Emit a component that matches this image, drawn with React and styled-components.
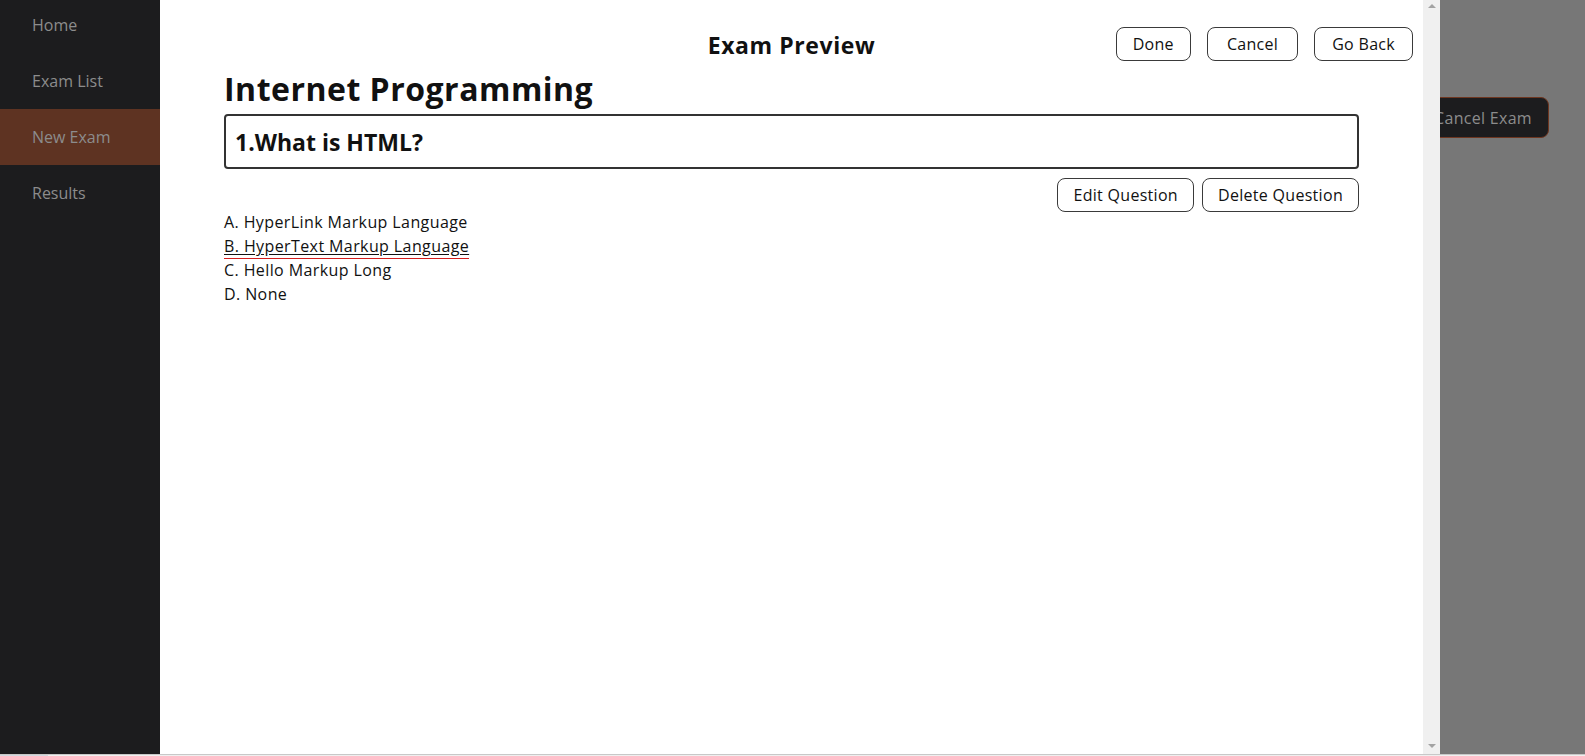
import React from "react";
import styled, { createGlobalStyle } from "styled-components";

const GlobalStyle = createGlobalStyle`
  html, body {
    margin: 0;
    padding: 0;
    height: 100%;
    overflow: hidden;
  }
  body {
    font-family: "Open Sans", "Liberation Sans", sans-serif;
    color: #111;
  }
  #root {
    height: 100%;
  }
  * {
    box-sizing: border-box;
  }
`;

const Page = styled.div`
  display: flex;
  flex-direction: column;
  height: 100vh;
`;

const Layout = styled.div`
  position: relative;
  display: flex;
  flex: 1;
  min-height: 0;
`;

const Sidebar = styled.nav`
  width: 160px;
  flex-shrink: 0;
  background: #1c1c1e;
`;

const NavList = styled.ul`
  list-style: none;
  margin: -3px 0 0;
  padding: 0;
`;

const NavItem = styled.li`
  height: 56px;
  display: flex;
  align-items: center;
  padding-left: 32px;
  font-size: 16px;
  color: #8c8c8c;
  background: ${({ active }) => (active ? "#5e3322" : "transparent")};
`;

const Main = styled.main`
  flex: 1;
  background: #777777;
  display: flex;
  justify-content: flex-end;
  align-items: flex-start;
  padding: 97px 36px 0 0;
`;

const CancelExamButton = styled.button`
  height: 41px;
  padding: 0 16px;
  background: #1c1c1e;
  border: 1px solid #6e3620;
  border-radius: 8px;
  color: #8c8c8c;
  font-family: inherit;
  font-size: 16px;
  letter-spacing: 0.3px;
`;

const Modal = styled.div`
  position: absolute;
  top: 0;
  bottom: 0;
  left: 160px;
  width: 1280px;
  display: flex;
  background: #fff;
`;

const ModalBody = styled.div`
  flex: 1;
  min-width: 0;
`;

const Scrollbar = styled.div`
  width: 17px;
  flex-shrink: 0;
  background: #f0f0f0;
  display: flex;
  flex-direction: column;
  justify-content: space-between;
  align-items: center;
  padding: 4px 0 6px;
`;

const Arrow = styled.span`
  width: 0;
  height: 0;
  border-left: 4px solid transparent;
  border-right: 4px solid transparent;
  ${({ down }) =>
    down ? "border-top: 4px solid #a3a3a3;" : "border-bottom: 4px solid #a3a3a3;"}
`;

const Header = styled.header`
  display: grid;
  grid-template-columns: 1fr auto 1fr;
  align-items: start;
  padding: 27px 10px 0;
`;

const HeaderTitle = styled.h2`
  grid-column: 2;
  margin: 2px 0 0;
  font-size: 23px;
  font-weight: 700;
  letter-spacing: 0.6px;
`;

const HeaderActions = styled.div`
  grid-column: 3;
  justify-self: end;
  display: flex;
  gap: 16px;
`;

const OutlineButton = styled.button`
  height: 34px;
  padding: 0 ${({ pad }) => pad || 16}px;
  background: #fff;
  border: 1px solid #3a3a3a;
  border-radius: 8px;
  color: #111;
  font-family: inherit;
  font-size: 16px;
  letter-spacing: 0.3px;
`;

const Content = styled.section`
  padding: 0 64px;
`;

const CourseTitle = styled.h1`
  margin: 9px 0 0;
  font-size: 32px;
  line-height: 38px;
  font-weight: 700;
  letter-spacing: 0.5px;
`;

const QuestionBox = styled.div`
  margin-top: 6px;
  height: 55px;
  display: flex;
  align-items: center;
  padding: 0 9px;
  border: 2px solid #333;
  border-radius: 4px;
  font-size: 23px;
  font-weight: 700;
`;

const QuestionActions = styled.div`
  display: flex;
  justify-content: flex-end;
  gap: 8px;
  margin-top: 9px;
`;

const OptionList = styled.ol`
  list-style: none;
  margin: -2px 0 0;
  padding: 0;
`;

const Option = styled.li`
  font-size: 16px;
  line-height: 24px;
  letter-spacing: 0.4px;
  color: #111;
`;

const MarkedText = styled.span`
  text-decoration: underline;
  text-underline-offset: 2px;
  border-bottom: 1px solid #d41c1c;
  padding-bottom: 1px;
`;

const BottomStrip = styled.div`
  height: 2px;
  display: flex;
  background: #efefef;
  border-top: 1px solid #c8c8c8;
`;

const StripEdge = styled.span`
  width: 48px;
  background: #d3d8e0;
`;

const navItems = ["Home", "Exam List", "New Exam", "Results"];

const options = [
  { label: "A. HyperLink Markup Language" },
  { label: "B. HyperText Markup Language", marked: true },
  { label: "C. Hello Markup Long" },
  { label: "D. None" },
];

export default function App() {
  return (
    <Page>
      <GlobalStyle />
      <Layout>
        <Sidebar>
          <NavList>
            {navItems.map((item) => (
              <NavItem key={item} active={item === "New Exam"}>
                {item}
              </NavItem>
            ))}
          </NavList>
        </Sidebar>
        <Main>
          <CancelExamButton>Cancel Exam</CancelExamButton>
        </Main>

        <Modal>
          <ModalBody>
            <Header>
              <HeaderTitle>Exam Preview</HeaderTitle>
              <HeaderActions>
                <OutlineButton>Done</OutlineButton>
                <OutlineButton pad={19}>Cancel</OutlineButton>
                <OutlineButton pad={17}>Go Back</OutlineButton>
              </HeaderActions>
            </Header>
            <Content>
              <CourseTitle>Internet Programming</CourseTitle>
              <QuestionBox>1.What is HTML?</QuestionBox>
              <QuestionActions>
                <OutlineButton pad={15}>Edit Question</OutlineButton>
                <OutlineButton pad={15}>Delete Question</OutlineButton>
              </QuestionActions>
              <OptionList>
                {options.map((o) => (
                  <Option key={o.label}>
                    {o.marked ? <MarkedText>{o.label}</MarkedText> : o.label}
                  </Option>
                ))}
              </OptionList>
            </Content>
          </ModalBody>
          <Scrollbar>
            <Arrow />
            <Arrow down />
          </Scrollbar>
        </Modal>
      </Layout>
      <BottomStrip>
        <StripEdge />
      </BottomStrip>
    </Page>
  );
}
